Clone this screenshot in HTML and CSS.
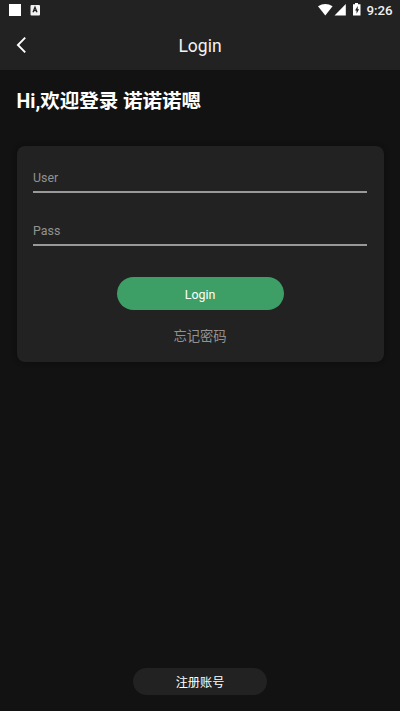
FILE: index.html
```html
<!DOCTYPE html>
<html lang="zh-CN">
<head>
<meta charset="utf-8">
<meta name="viewport" content="width=device-width, initial-scale=1">
<title>Login</title>
<link rel="stylesheet" href="styles.css">
</head>
<body>
<div class="screen">
  <div class="status">
    <svg class="status-left" width="44" height="20" viewBox="0 0 44 20">
      <rect x="9" y="4" width="12" height="12" fill="#fff"/>
      <rect x="30.5" y="5" width="9.5" height="10.5" rx="1" fill="#f2f2f2"/>
      <path d="M33 12.3 35 7.3 37 12.3M33.7 10.7h2.6" fill="none" stroke="#222" stroke-width="1.3"/>
    </svg>
    <svg width="46" height="20" viewBox="0 0 46 20">
      <path d="M0 6.2Q7.3 2 14.6 6.2L7.3 15.6Z" fill="#fff"/>
      <path d="M16.5 15.6 27.8 4v11.6Z" fill="#fff"/>
      <path d="M35 4.3h2V3h3v1.3h2.5v11.3H35Z" fill="#fff"/>
      <path d="m39.7 6-2.6 4.4h1.4v3.4l2.6-4.5h-1.4Z" fill="#222"/>
    </svg>
    <span class="clock">9:26</span>
  </div>
  <header class="bar">
    <button class="back" aria-label="Back"><svg width="12" height="18" viewBox="0 0 12 18"><path d="M9.2 1.6 1.9 9l7.3 7.4" fill="none" stroke="#fff" stroke-width="1.9"/></svg></button>
    <h1 class="title">Login</h1>
  </header>
  <main class="content">
    <h2 class="greeting">Hi,欢迎登录 诺诺诺嗯</h2>
    <form class="card">
      <input class="field" type="text" placeholder="User" aria-label="User">
      <input class="field" type="password" placeholder="Pass" aria-label="Pass">
      <button class="submit" type="button">Login</button>
      <a class="forgot">忘记密码</a>
    </form>
  </main>
  <button class="register" type="button">注册账号</button>
</div>
</body>
</html>
```

FILE: styles.css
```css
* { box-sizing: border-box; }
body {
  margin: 0;
  background: #121212;
  color: #fff;
  font-family: Roboto, "Noto Sans CJK SC", sans-serif;
}
button, input { font-family: inherit; border: 0; padding: 0; }
.screen {
  height: 711px;
  display: flex;
  flex-direction: column;
  align-items: center;
}
.status {
  width: 100%;
  height: 20px;
  display: flex;
  background: #222;
}
.status-left { margin-right: auto; }
.clock {
  width: 36px;
  padding-left: 2.5px;
  font-size: 13.3px;
  line-height: 22px;
  font-weight: 500;
  color: #f0f0f0;
}
.bar {
  width: 100%;
  height: 50px;
  display: grid;
  grid-template-columns: 40px 1fr 40px;
  align-items: center;
  background: #222;
}
.back {
  height: 18px;
  padding-left: 16px;
  background: none;
  text-align: left;
}
.back svg { display: block; }
.title {
  margin: 2px 0 0;
  text-align: center;
  font-size: 17.5px;
  line-height: 22px;
  font-weight: 400;
  color: #f2f2f2;
}
.content { width: 100%; padding: 16px 16.5px 0; }
.greeting {
  margin: 0;
  height: 60px;
  font-size: 19.5px;
  line-height: 31px;
  font-weight: 700;
}
.card {
  height: 215.5px;
  padding: 15px 16.5px 0;
  display: flex;
  flex-direction: column;
  border-radius: 8px;
  background: #222;
  box-shadow: 0 0 5px #0c0c0c;
}
.field {
  height: 32px;
  width: 100%;
  margin-bottom: 21px;
  padding-top: 3px;
  border-bottom: 2px solid #999;
  border-radius: 0;
  outline: 0;
  background: none;
  color: #fff;
  font-size: 12.4px;
}
.field::placeholder { color: #929292; opacity: 1; }
.submit {
  width: 167px;
  height: 33px;
  margin-top: 10px;
  padding-top: 1px;
  align-self: center;
  border-radius: 17px;
  background: #3e9f66;
  color: #fff;
  font-size: 12.4px;
}
.forgot {
  margin-top: 17px;
  text-align: center;
  font-size: 13.3px;
  line-height: 20px;
  color: #929292;
}
.register {
  width: 134px;
  height: 27px;
  margin: auto 0 16.5px;
  padding-top: 1px;
  border-radius: 14px;
  background: #222;
  color: #fff;
  font-size: 12.2px;
}
```
